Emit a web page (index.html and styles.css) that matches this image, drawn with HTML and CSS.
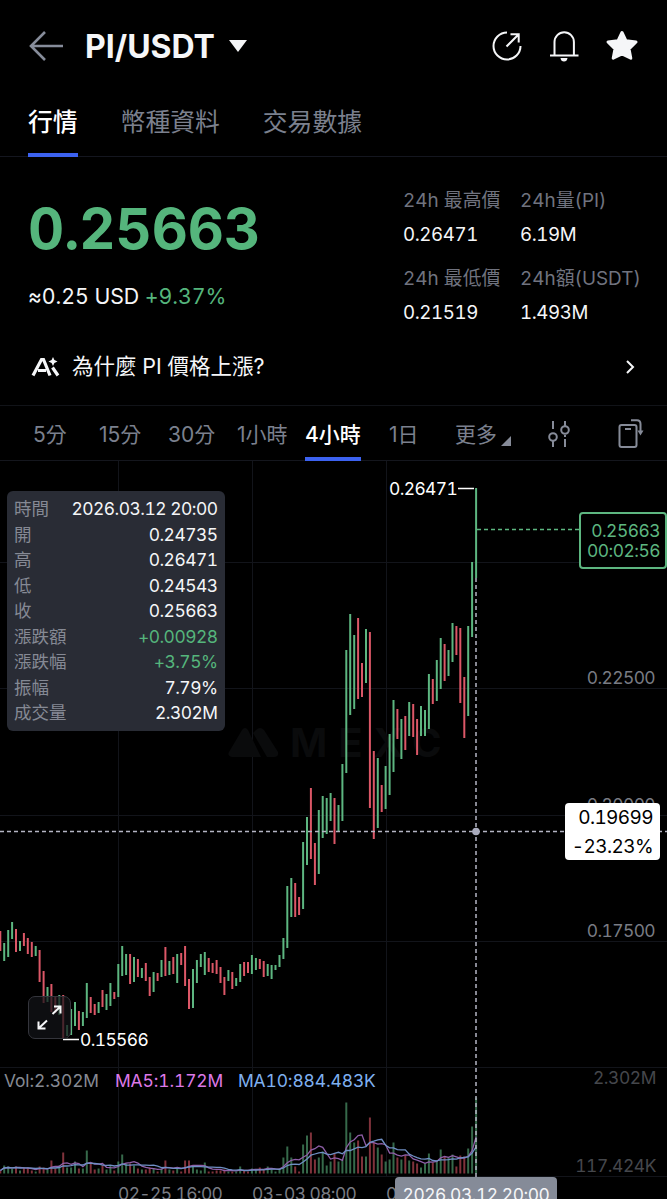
FILE: index.html
```html
<!DOCTYPE html>
<html lang="zh-Hant">
<head>
    <meta charset="UTF-8">
    <meta name="viewport" content="width=device-width, initial-scale=1.0">
    <title>PI/USDT</title>
    <link rel="stylesheet" href="styles.css">
</head>
<body>
<div class="header">
    <svg class="back" width="36" height="32" viewBox="0 0 36 32"><path d="M17 2 L3 16 L17 30 M3 16 H35" /></svg>
    <h1>PI/USDT</h1>
    <span class="caret"></span>
    <div class="actions">
        <svg width="32" height="32" viewBox="0 0 32 32"><path d="M16 2.5 A13.5 13.5 0 1 0 29.5 16" /><path d="M15.5 16.5 L27.5 4.5 M19.5 4.3 H27.7 V12.5" /></svg>
        <svg width="32" height="32" viewBox="0 0 32 32"><path d="M6.5 25.5 V12 A9.7 9.7 0 0 1 25.9 12 V25.5 M2 25.5 H30.5" /><path class="fill" d="M12.5 28 H19.5 Q19 31.5 16 31.5 Q13 31.5 12.5 28Z" /></svg>
        <svg width="34" height="32" viewBox="0 0 34 32"><path class="star" d="M17 2.5 L21 10.8 L31 12 L24 18.8 L25.8 28.2 L17 23.8 L8.2 28.2 L10 18.8 L3 12 L13 10.8 Z" /></svg>
    </div>
</div>

<div class="tabs">
    <a class="active">行情</a>
    <a>幣種資料</a>
    <a>交易數據</a>
</div>

<div class="summary">
    <div class="top">
        <div class="left">
            <div class="price">0.25663</div>
            <div class="approx">≈0.25 USD <span class="up">+9.37%</span></div>
        </div>
        <div class="stats">
            <div><label>24h 最高價</label><p>0.26471</p></div>
            <div><label>24h量(PI)</label><p>6.19M</p></div>
            <div><label>24h 最低價</label><p>0.21519</p></div>
            <div><label>24h額(USDT)</label><p>1.493M</p></div>
        </div>
    </div>
    <div class="why">
        <svg width="30" height="20" viewBox="0 0 30 20"><path d="M2 18.5 L10.5 2.5 H12.5 L19 18.5 M7 13.5 H15 M21.5 10.5 L27 18.5" /><path class="fill" d="M22 0 L23.4 3.1 L26.5 4.5 L23.4 5.9 L22 9 L20.6 5.9 L17.5 4.5 L20.6 3.1Z" /></svg>
        <span>為什麼 PI 價格上漲?</span>
        <svg class="more" width="10" height="14" viewBox="0 0 10 14"><path d="M2 1 L8 7 L2 13" /></svg>
    </div>
</div>

<div class="intervals">
    <a>5分</a>
    <a>15分</a>
    <a>30分</a>
    <a>1小時</a>
    <a class="active">4小時</a>
    <a>1日</a>
    <a>更多<i class="corner"></i></a>
    <svg width="24" height="28" viewBox="0 0 24 28"><path d="M5 1 V9 M5 21 V27 M17 1 V6 M17 15 V17 M17 19 V27" /><circle cx="5" cy="17" r="3.8" /><circle cx="17" cy="10" r="3.8" /></svg>
    <svg width="26" height="30" viewBox="0 0 26 30"><rect x="1.5" y="6" width="17" height="22" rx="2" /><path d="M7 10 H13 M13 1.2 H19 Q22.5 1.2 22.5 5 V12" /><path class="tip" d="M19.5 11.5 H25.5 L22.5 16.5Z" /></svg>
</div>

<div class="chart">
    <svg id="plot" width="667" height="738" viewBox="0 461 667 738">
        <path class="grid" d="M118.5 461V1176 M252.5 461V1176 M386.5 461V1176 M0 562.5H667 M0 688.5H667 M0 815.5H667 M0 941.5H667 M0 1067.5H667 M0 1176.5H667" />
        <g class="watermark">
            <path d="M229 752 L242 730 Q245 726 248 730 L261 757 H232 Q227 756 229 752Z M256 730 Q260 726 264 730 L278 752 Q279 757 274 757 H267 L253 733Z" />
            <text x="290" y="757" textLength="151">MEXC</text>
        </g>
        <g id="candles"></g>
        <g id="volumes"></g>
        <path id="ma5" />
        <path id="ma10" />
        <g class="axis">
            <text x="655" y="684">0.22500</text>
            <text x="655" y="811">0.20000</text>
            <text x="655" y="937">0.17500</text>
            <text class="dim" x="656" y="1084">2.302M</text>
            <text class="dim" x="656" y="1172">117.424K</text>
        </g>
        <g class="dates">
            <text x="118" y="1200">02-25 16:00</text>
            <text x="252" y="1200">03-03 08:00</text>
            <text x="386" y="1200">03-09 00:00</text>
        </g>
        <g class="marks">
            <text x="389" y="495">0.26471</text>
            <text x="80" y="1046">0.15566</text>
            <path d="M458 488.5H474 M63 1039.5H79" />
        </g>
        <path class="last" d="M477 529.5H580" />
        <path class="cross" d="M0 831.5H667 M476 578V1177" />
        <circle class="dot" cx="476" cy="831.5" r="3.8" />
        <g class="legend">
            <text x="4" y="1087">Vol:2.302M</text>
            <text class="pink" x="115" y="1087">MA5:1.172M</text>
            <text class="blue" x="238" y="1087">MA10:884.483K</text>
        </g>
    </svg>

    <div class="info">
        <div><span>時間</span><b>2026.03.12 20:00</b></div>
        <div><span>開</span><b>0.24735</b></div>
        <div><span>高</span><b>0.26471</b></div>
        <div><span>低</span><b>0.24543</b></div>
        <div><span>收</span><b>0.25663</b></div>
        <div><span>漲跌額</span><b class="up">+0.00928</b></div>
        <div><span>漲跌幅</span><b class="up">+3.75%</b></div>
        <div><span>振幅</span><b>7.79%</b></div>
        <div><span>成交量</span><b>2.302M</b></div>
    </div>
    <div class="lastprice">0.25663<br>00:02:56</div>
    <div class="crossprice">0.19699<br>-23.23%</div>
    <div class="crossdate">2026.03.12 20:00</div>
    <div class="expand">
        <svg width="42" height="42" viewBox="0 0 42 42"><path d="M23.5 17 L31.5 9.5 M25 9.5 H31.5 V16.5 M18 23.5 L9.5 31.5 M9.5 24.5 V31.5 H16.5" /></svg>
    </div>
</div>

<script src="script.js"></script>
</body>
</html>
```
FILE: styles.css
```css
*{
    margin: 0;
    padding: 0;
    box-sizing: border-box;
}
body{
    background-color: #000;
    color: #f5f6f8;
    font-family: Inter, "Noto Sans CJK TC", sans-serif;
    font-variant-numeric: tabular-nums;
    width: 667px;
    height: 1199px;
    overflow: hidden;
}
svg{
    display: block;
    fill: none;
    stroke: #f5f6f8;
    stroke-width: 2;
    flex: none;
}
svg .fill{
    fill: #f5f6f8;
    stroke: none;
}
.up{
    color: #55b57c;
}

/* header */
.header{
    height: 92px;
    display: flex;
    align-items: center;
    padding: 0 28px 0 28px;
}
.back{
    stroke: #868c9a;
    stroke-width: 2.6;
}
h1{
    font-size: 32px;
    font-weight: 700;
    line-height: 40px;
    margin: 1px 0 0 21px;
}
.caret{
    border: 9px solid transparent;
    border-top: 12px solid #f5f6f8;
    border-bottom: 0;
    margin-left: 14px;
}
.actions{
    display: flex;
    gap: 25px;
    margin-left: auto;
}
.actions .star{
    fill: #f5f6f8;
    stroke-width: 3;
    stroke-linejoin: round;
}

/* tabs */
.tabs{
    height: 65px;
    display: flex;
    gap: 43px;
    padding: 0 28px;
    border-bottom: 1px solid #14161f;
}
.tabs a{
    height: 65px;
    font-size: 24.8px;
    line-height: 60px;
    color: #7b808e;
}
.tabs a.active{
    color: #fff;
    font-weight: 500;
    border-bottom: 4px solid #3c62f0;
}

/* price block */
.summary{
    height: 249px;
    border-bottom: 1px solid #111318;
}
.top{
    display: flex;
    height: 179px;
}
.left{
    width: 403px;
    padding: 44px 0 0 28px;
}
.price{
    font-size: 56px;
    font-weight: 700;
    line-height: 56px;
    color: #55b57c;
}
.approx{
    font-size: 21.3px;
    line-height: 26px;
    margin-top: 26px;
    letter-spacing: -.05px;
}
.stats{
    display: grid;
    grid-template-columns: 117px 140px;
    grid-template-rows: 78px 78px;
    padding-top: 32px;
}
.stats label{
    display: block;
    font-size: 18.9px;
    line-height: 24px;
    color: #70737f;
    white-space: nowrap;
}
.stats p{
    font-size: 18.7px;
    line-height: 24px;
    margin-top: 10px;
    letter-spacing: -.4px;
}
.why{
    display: flex;
    align-items: center;
    height: 61px;
    padding: 0 32px 0 31px;
    font-size: 21.5px;
}
.why svg{
    stroke-width: 3.2;
}
.why span{
    line-height: 30px;
    margin: -2px 0 0 11px;
}
.why .more{
    stroke-width: 2;
    margin-left: auto;
}

/* interval bar */
.intervals{
    height: 55px;
    display: grid;
    grid-template-columns: 66px 69px 69px 68px 84px 66px 93px 70px 26px;
    justify-items: start;
    align-items: center;
    padding-left: 33px;
    border-bottom: 1px solid #14161d;
}
.intervals a{
    height: 55px;
    font-size: 21px;
    font-variant-numeric: normal;
    line-height: 57px;
    color: #7b808e;
    white-space: nowrap;
}
.intervals a.active{
    color: #fff;
    font-weight: 500;
    border-bottom: 4px solid #3c62f0;
}
.intervals svg{
    stroke: #868b98;
}
.intervals .tip{
    fill: #868b98;
    stroke: none;
}
.corner{
    display: inline-block;
    border-left: 10px solid transparent;
    border-bottom: 10px solid #868b98;
    margin-left: 4px;
    vertical-align: -4px;
}

/* chart */
.chart{
    position: relative;
    height: 738px;
}
#plot text{
    stroke: none;
    font-size: 17.4px;
    letter-spacing: -.6px;
}
#plot .grid{
    stroke: #12141a;
    stroke-width: 1;
}
.watermark path, #plot .watermark text{
    fill: #0a0b0c;
    stroke: none;
}
#plot .watermark text{
    font-size: 40px;
    font-weight: 700;
}
.g{
    stroke: #5db680;
}
.r{
    stroke: #dc5767;
}
#volumes{
    opacity: .58;
}
#ma5, #ma10{
    stroke: #8f5fa8;
    stroke-width: 1.3;
}
#ma10{
    stroke: #6f8fc4;
}
.axis{
    fill: #797c84;
    text-anchor: end;
}
#plot .axis .dim{
    fill: #45474c;
    letter-spacing: -.4px;
}
.dates{
    fill: #797c84;
}
.marks{
    fill: #fff;
}
.marks path{
    stroke: #fff;
    stroke-width: 1.5;
}
.last{
    stroke: #5db680;
    stroke-width: 1.5;
    stroke-dasharray: 4 3;
}
.cross{
    stroke: #b4b5c3;
    stroke-width: 1.5;
    stroke-dasharray: 4 3;
}
.dot{
    fill: #a9abbd;
    stroke: none;
}
.legend{
    fill: #868a93;
}
#plot .legend text{
    letter-spacing: -.1px;
}
.legend .pink{
    fill: #dd79e8;
}
.legend .blue{
    fill: #7fb0f0;
}
.info{
    position: absolute;
    left: 7px;
    top: 30px;
    width: 218px;
    height: 240px;
    padding: 5px 7.5px 0 7px;
    border-radius: 6px;
    background-color: #292c35;
}
.info div{
    display: flex;
    justify-content: space-between;
    font-size: 17.4px;
    line-height: 25.5px;
    height: 25.5px;
}
.info span{
    color: #858994;
    font-size: 17.5px;
}
.info b{
    font-weight: 400;
    letter-spacing: -.5px;
}
.lastprice{
    position: absolute;
    left: 579px;
    top: 51px;
    width: 88px;
    height: 57px;
    padding: 7px 5px 0 0;
    border: 2px solid #5db680;
    border-radius: 4px;
    background-color: #000;
    color: #5db680;
    font-size: 17.4px;
    letter-spacing: -.5px;
    line-height: 20px;
    text-align: right;
}
.crossprice{
    position: absolute;
    left: 565px;
    top: 342px;
    width: 95px;
    height: 57px;
    padding-right: 7px;
    border-radius: 4px;
    background-color: #fff;
    color: #000;
    font-size: 19px;
    letter-spacing: -.6px;
    line-height: 29px;
    text-align: right;
}
.crossdate{
    position: absolute;
    left: 395px;
    top: 716px;
    width: 162px;
    height: 30px;
    border-radius: 4px;
    background-color: #858b98;
    font-size: 17.4px;
    letter-spacing: -.45px;
    line-height: 36px;
    text-align: center;
}
.expand{
    position: absolute;
    left: 28px;
    top: 535px;
    width: 43px;
    height: 43px;
    border: 1.5px solid #34353c;
    border-radius: 7px;
    background-color: rgba(18, 19, 23, .72);
}
```
FILE: script.js
```js
// each candle: direction, high y, low y, volume height
const data = `
r 931 951 3,g 943 961 8,g 930 957 7,g 922 939 5,r 929 952 7,g 941 951 3,r 933 946 6,r 938 954 6,r 942 957 3,g 946 956 2,
r 950 982 7,r 971 1003 6,g 987 1002 4,r 984 1012 13,r 997 1013 5,g 995 1015 8,r 995 1038 21,g 1025 1036 6,g 1009 1035 6,g 1002 1026 12,
r 1011 1030 5,g 1012 1026 5,g 983 1018 23,r 997 1013 10,r 1004 1015 4,g 1002 1013 5,r 990 1007 8,g 994 1010 4,g 983 1006 8,r 992 999 3,
g 964 997 12,g 946 976 19,g 954 975 10,r 954 984 10,g 957 982 8,r 959 977 5,g 968 978 4,r 963 981 4,r 977 996 6,g 972 992 5,
r 973 981 2,g 960 977 5,r 947 976 13,g 961 975 4,r 957 974 3,g 954 983 5,r 953 965 2,r 946 986 13,r 979 1009 13,g 969 1008 8,
g 960 983 4,g 954 967 3,g 952 975 11,r 958 972 2,r 963 973 2,r 960 974 3,r 967 983 3,r 977 995 4,g 970 981 2,r 972 989 2,
g 978 986 2,g 964 982 7,r 962 976 3,r 962 973 2,g 955 974 5,g 958 970 4,r 959 969 6,r 961 977 4,g 964 976 7,g 965 979 4,
g 965 970 2,g 955 967 5,g 938 959 16,g 886 948 27,g 878 917 16,r 883 917 7,r 897 915 2,g 842 909 29,g 817 865 38,r 788 859 41,
r 843 885 14,g 810 874 16,g 796 838 22,g 798 834 8,g 793 821 12,r 798 844 20,g 805 832 12,g 764 821 14,g 650 773 71,g 614 715 41,
g 635 709 31,r 618 699 33,r 663 697 17,g 629 683 17,r 632 808 56,r 751 839 31,g 758 828 26,r 785 812 19,g 766 809 12,g 734 795 14,
g 700 772 31,r 709 739 16,g 719 759 14,r 716 750 18,g 702 736 13,r 704 737 12,r 719 755 10,g 706 736 6,g 710 736 10,g 674 729 20,
r 679 704 11,g 660 701 13,g 638 689 24,r 644 681 17,g 650 676 16,g 623 662 19,r 626 655 7,r 628 703 18,r 677 738 17,g 626 716 25,
g 562 637 47,g 488 578 76`;

const step = 3.932;
const base = 1173.5;
const rows = data.split(",").map(row => row.trim().split(" "));
const vols = rows.map(row => Number(row[3]));

let candles = "";
let volumes = "";
rows.forEach((row, i) => {
    const x = (0.3 + i * step).toFixed(1);
    candles += `<path class="${row[0]}" d="M${x} ${row[1]}V${row[2]}"/>`;
    volumes += `<path class="${row[0]}" d="M${x} ${base}V${base - vols[i]}"/>`;
});
document.getElementById("candles").innerHTML = candles;
document.getElementById("volumes").innerHTML = volumes;

// moving average of the volume bars
function average(size){
    let path = "";
    vols.forEach((v, i) => {
        const part = vols.slice(Math.max(0, i - size + 1), i + 1);
        const mean = part.reduce((a, b) => a + b, 0) / part.length;
        path += (i ? "L" : "M") + (0.3 + i * step).toFixed(1) + " " + (base - mean).toFixed(1);
    });
    return path;
}
document.getElementById("ma5").setAttribute("d", average(5));
document.getElementById("ma10").setAttribute("d", average(10));
```
